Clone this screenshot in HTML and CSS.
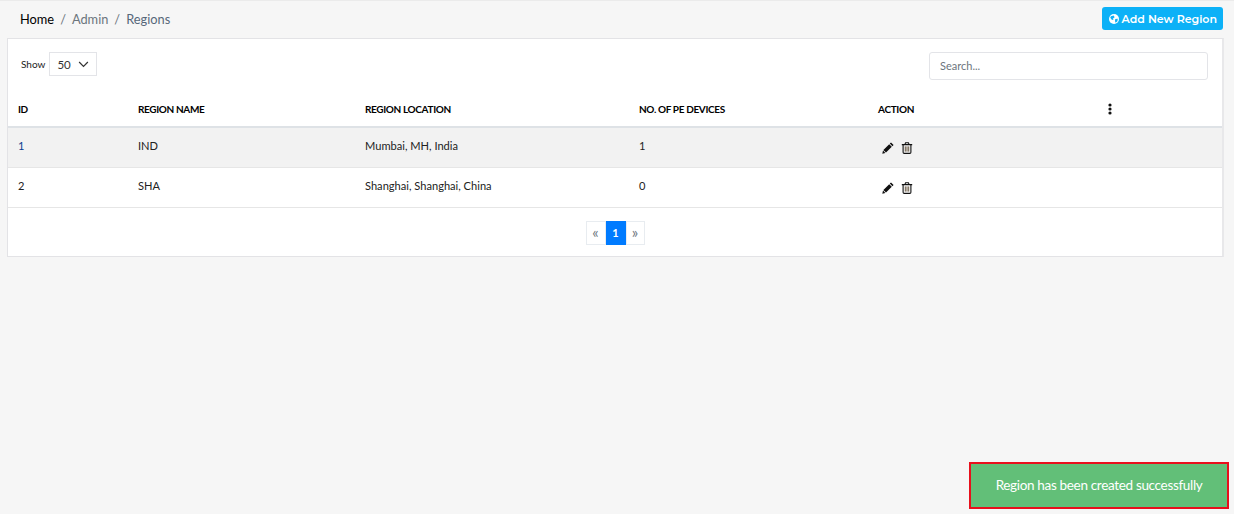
FILE: index.html
```html
<!DOCTYPE html>
<html lang="en">
<head>
<meta charset="utf-8">
<title>Regions</title>
<link rel="stylesheet" href="styles.css">
</head>
<body>
<header class="topbar">
  <nav class="crumbs">
    <span class="crumb-home">Home</span><span class="crumb-sep">/</span><span class="crumb-mid">Admin</span><span class="crumb-sep">/</span><span class="crumb-cur">Regions</span>
  </nav>
  <button class="add-btn" type="button">
    <svg class="globe" viewBox="0 0 16 16" width="10" height="10"><circle cx="8" cy="8" r="8" fill="#fff"/><path d="M3 3.5 L7.5 2.5 L9 5 L6.5 7 L7 9.5 L4.5 9 L2 6 Z M10 8 L14 7.5 L13.5 11.5 L10.5 14 L9.5 11 Z" fill="#0cb1f7"/></svg>
    Add New Region
  </button>
</header>
<main class="card">
  <div class="controls">
    <label class="show"><span>Show</span>
      <span class="select">50
        <svg class="chev" viewBox="0 0 12 8" width="11" height="7"><path d="M1 1.2 L6 6.2 L11 1.2" fill="none" stroke="#333" stroke-width="1.4"/></svg>
      </span>
    </label>
    <div class="search">Search...</div>
  </div>
  <table class="grid">
    <colgroup><col class="c1"><col class="c2"><col class="c3"><col class="c4"><col class="c5"><col></colgroup>
    <thead>
      <tr><th>ID</th><th>REGION NAME</th><th>REGION LOCATION</th><th>NO. OF PE DEVICES</th><th>ACTION</th>
        <th><svg class="dots" viewBox="0 0 4 12" width="4" height="12"><circle cx="2" cy="2" r="1.6"/><circle cx="2" cy="6" r="1.6"/><circle cx="2" cy="10" r="1.6"/></svg></th></tr>
    </thead>
    <tbody>
      <tr class="alt"><td class="link">1</td><td>IND</td><td>Mumbai, MH, India</td><td>1</td>
        <td class="acts">
          <svg class="ico" viewBox="0 0 12 12" width="12" height="12"><path d="M9 .4 11.6 3 10.4 4.2 7.8 1.6ZM7.2 2.2 9.8 4.8 4 10.6 1.4 8ZM1 8.6 3.4 11 .3 11.7Z" fill="#111"/></svg>
          <svg class="ico" viewBox="0 0 12 12" width="12" height="12"><path d="M.8 2.6H11.2M3.9 2.4 4.6.7H7.4L8.1 2.4M2.1 2.6V10.3Q2.1 11.4 3.2 11.4H8.8Q9.9 11.4 9.9 10.3V2.6" fill="none" stroke="#111" stroke-width="1.1"/><path d="M4.3 4.4V9.6M6 4.4V9.6M7.7 4.4V9.6" fill="none" stroke="#6b5a45" stroke-width="1"/></svg>
        </td><td></td></tr>
      <tr><td>2</td><td>SHA</td><td>Shanghai, Shanghai, China</td><td>0</td>
        <td class="acts">
          <svg class="ico" viewBox="0 0 12 12" width="12" height="12"><path d="M9 .4 11.6 3 10.4 4.2 7.8 1.6ZM7.2 2.2 9.8 4.8 4 10.6 1.4 8ZM1 8.6 3.4 11 .3 11.7Z" fill="#111"/></svg>
          <svg class="ico" viewBox="0 0 12 12" width="12" height="12"><path d="M.8 2.6H11.2M3.9 2.4 4.6.7H7.4L8.1 2.4M2.1 2.6V10.3Q2.1 11.4 3.2 11.4H8.8Q9.9 11.4 9.9 10.3V2.6" fill="none" stroke="#111" stroke-width="1.1"/><path d="M4.3 4.4V9.6M6 4.4V9.6M7.7 4.4V9.6" fill="none" stroke="#6b5a45" stroke-width="1"/></svg>
        </td><td></td></tr>
    </tbody>
  </table>
  <div class="pager">
    <span class="page">«</span><span class="page active">1</span><span class="page last">»</span>
  </div>
</main>
<div class="toast">Region has been created successfully</div>
</body>
</html>
```
FILE: styles.css
```css
* { box-sizing: border-box; }
html, body { height: 100%; }
body {
  margin: 0;
  height: 514px;
  overflow: hidden;
  background: #f6f6f6;
  border-top: 1px solid #ebebeb;
  font-family: Lato, "Liberation Sans", sans-serif;
  color: #1a1a1a;
}
.topbar {
  display: flex;
  align-items: center;
  justify-content: space-between;
  height: 37px;
  padding: 0 11px 2px 20px;
}
.crumbs { font-size: 12.8px; color: #6c757d; }
.crumb-home { color: #000; }
.crumb-mid { color: #6c757d; }
.crumb-cur { color: #56687a; }
.crumb-sep { margin: 0 6px; color: #6c757d; }
.add-btn {
  display: flex;
  align-items: center;
  gap: 3px;
  height: 23px;
  padding: 0 6px 0 7px;
  border: 0;
  border-radius: 3px;
  background: #0cb1f7;
  color: #fff;
  font-family: Montserrat, "Open Sans", sans-serif;
  font-size: 11px;
  font-weight: 600;
}
.card {
  margin: 0 10px 0 7px;
  height: 219px;
  background: #fff;
  border: 1px solid #e3e3e6;
  border-right: 2px solid #e8e8ea;
}
.controls {
  display: flex;
  justify-content: space-between;
  height: 52px;
  padding: 13px 14px 0 13px;
}
.show { display: flex; align-items: center; gap: 4px; height: 24px; font-size: 10px; color: #222; }
.select {
  display: flex;
  align-items: center;
  justify-content: space-between;
  width: 48px;
  height: 24px;
  padding: 0 7px;
  border: 1px solid #e3e4e8;
  font-size: 11.5px;
  color: #333;
}
.search {
  width: 279px;
  height: 28px;
  padding: 0 10px;
  border: 1px solid #e3e4e8;
  border-radius: 3px;
  font-size: 11px;
  line-height: 25px;
  color: #6c757d;
}
.grid { width: 100%; border-collapse: collapse; table-layout: fixed; font-size: 11.1px; }
.c1 { width: 120px; }
.c2 { width: 227px; }
.c3 { width: 274px; }
.c4 { width: 239px; }
.c5 { width: 230px; }
th, td { padding: 0 0 0 10px; text-align: left; }
th { height: 36px; font-size: 10px; font-weight: 700; letter-spacing: -0.35px; color: #000; border-bottom: 2px solid #dee2e6; }
td { height: 40px; padding-bottom: 3px; color: #222; border-bottom: 1px solid #e6e6e6; }
.alt td { background: #f2f2f2; }
.link { color: #0b3d91; }
.acts { padding: 0 0 2px 14px; }
.ico { vertical-align: middle; margin-right: 4px; margin-top: 4px; }
.dots { fill: #111; display: block; }
.pager { display: flex; justify-content: center; margin-top: 13px; }
.page {
  width: 20px;
  height: 24px;
  border: 1px solid #e8ecf0;
  font-size: 15px;
  line-height: 20px;
  text-align: center;
  color: #6c757d;
}
.page.active { background: #007bff; border-color: #007bff; color: #fff; font-size: 11px; line-height: 22px; font-weight: 700; }
.page.last { width: 19px; }
.toast {
  position: absolute;
  left: 969px;
  top: 462px;
  width: 260px;
  height: 47px;
  border: 2px solid #e8101c;
  background: #62bf78;
  color: #fff;
  font-size: 13.5px;
  letter-spacing: -0.33px;
  line-height: 43px;
  text-align: center;
}
```
